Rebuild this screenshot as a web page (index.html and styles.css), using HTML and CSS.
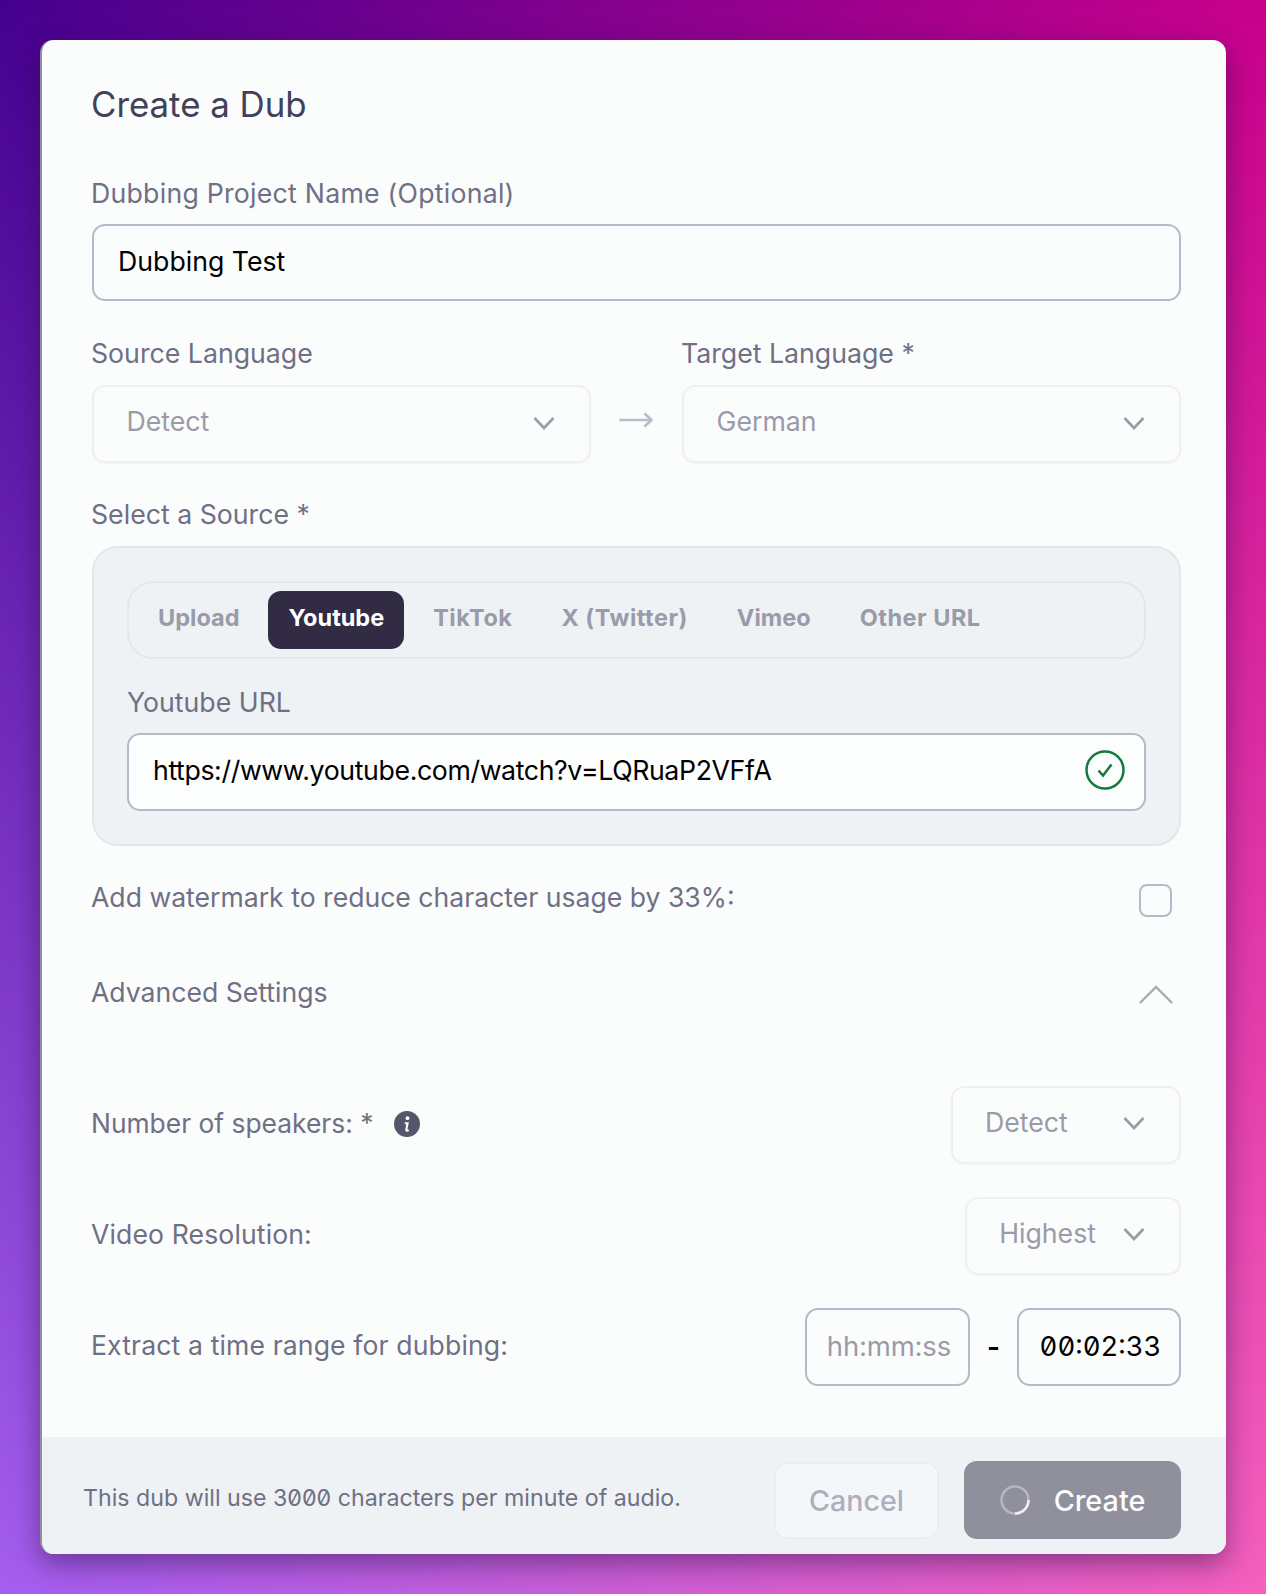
FILE: index.html
```html
<!DOCTYPE html>
<html lang="en">
<head>
<meta charset="utf-8">
<title>Create a Dub</title>
<link rel="stylesheet" href="styles.css">
</head>
<body>
<div class="page">
  <div class="card">
    <div class="content">
      <h1 class="title">Create a Dub</h1>
      <div class="field field-first">
        <label class="label label-wide">Dubbing Project Name (Optional)</label>
        <div class="input input-name">Dubbing Test</div>
      </div>
      <div class="lang-row">
        <div class="lang-col">
          <label class="label">Source Language</label>
          <div class="select select-wide"><span>Detect</span>
            <svg class="chev" viewBox="0 0 22 14"><path d="M1.500 2 11 12 20.500 2"/></svg></div>
        </div>
        <svg class="arrow" viewBox="0 0 36 16"><path d="M1.500 8H33.500M27 2l6.500 6-6.500 6"/></svg>
        <div class="lang-col">
          <label class="label">Target Language *</label>
          <div class="select select-wide"><span>German</span>
            <svg class="chev" viewBox="0 0 22 14"><path d="M1.500 2 11 12 20.500 2"/></svg></div>
        </div>
      </div>
      <div class="field field-source">
        <label class="label">Select a Source *</label>
        <div class="source">
          <div class="tabs">
            <span class="tab">Upload</span>
            <span class="tab tab-active">Youtube</span>
            <span class="tab tab-loose">TikTok</span>
            <span class="tab tab-loose">X (Twitter)</span>
            <span class="tab">Vimeo</span>
            <span class="tab tab-loose">Other URL</span>
          </div>
          <label class="label url-label">Youtube URL</label>
          <div class="input url-input">
            <span>https://www.youtube.com/watch?v=LQRuaP2VFfA</span>
            <svg class="check" viewBox="0 0 40 40"><circle cx="20" cy="20" r="18.500"/><path d="M13.500 20.500 18 25.500 26.500 14.500"/></svg>
          </div>
        </div>
      </div>
      <div class="row watermark">
        <span class="row-label">Add watermark to reduce character usage by 33%:</span>
        <span class="checkbox"></span>
      </div>
      <div class="row advanced">
        <span class="row-label">Advanced Settings</span>
        <svg class="chev-up" viewBox="0 0 36 20"><path d="M1 19 18 2 35 19"/></svg>
      </div>
      <div class="row setting first-setting">
        <span class="row-label with-icon">Number of speakers: *
          <svg class="info" viewBox="0 0 26 26"><circle cx="13" cy="13" r="13"/><circle class="info-dot" cx="13.500" cy="7.200" r="1.900"/><path class="info-bar" d="M10.800 12.200h2.800l-1.300 6.400c-.2 1.200.9 1.400 2.400.5"/></svg>
        </span>
        <div class="select select-small select-speakers"><span>Detect</span>
          <svg class="chev" viewBox="0 0 22 14"><path d="M1.500 2 11 12 20.500 2"/></svg></div>
      </div>
      <div class="row setting">
        <span class="row-label row-label-loose">Video Resolution:</span>
        <div class="select select-small"><span>Highest</span>
          <svg class="chev" viewBox="0 0 22 14"><path d="M1.500 2 11 12 20.500 2"/></svg></div>
      </div>
      <div class="row setting">
        <span class="row-label row-label-loose">Extract a time range for dubbing:</span>
        <div class="times">
          <div class="time time-empty">hh:mm:ss</div>
          <span class="dash">-</span>
          <div class="time">00:02:33</div>
        </div>
      </div>
    </div>
    <div class="footer">
      <span class="note">This dub will use 3000 characters per minute of audio.</span>
      <div class="actions">
        <button class="btn btn-cancel" type="button">Cancel</button>
        <button class="btn btn-create" type="button">
          <svg class="spinner" viewBox="0 0 30 30"><circle class="spin-track" cx="15" cy="15" r="13.500"/><path class="spin-arc" d="M28.500 15A13.500 13.500 0 0 1 15 28.500"/></svg>
          Create
        </button>
      </div>
    </div>
  </div>
</div>
</body>
</html>
```
FILE: styles.css
```css
* { box-sizing: border-box; }
html, body { margin: 0; padding: 0; }
body { font-family: Inter, "Noto Sans", sans-serif; }
.page {
  position: relative;
  width: 1266px;
  height: 1594px;
  padding: 40px 40px 0 40px;
  background: linear-gradient(90deg, #45008f 0%, #c9008c 100%);
  overflow: hidden;
}
.page::before {
  content: "";
  position: absolute;
  inset: 0;
  background: linear-gradient(90deg, #a45ef0 0%, #f45fbd 100%);
  -webkit-mask-image: linear-gradient(180deg, transparent 0%, #000 100%);
  mask-image: linear-gradient(180deg, transparent 0%, #000 100%);
}
.card {
  position: relative;
  width: 1186px;
  background: #fbfcfc;
  border-left: 2px solid #8f909b;
  border-radius: 13px;
  overflow: hidden;
  box-shadow: 0 10px 28px rgba(30, 10, 60, .45);
}
.content { padding: 44px 45px 51px 50px; }
.title {
  margin: 0 0 0 -1px;
  font-size: 34.800px;
  line-height: 40px;
  font-weight: 400;
  color: #41415a;
}
.field { margin-top: 34px; }
.field-first { margin-top: 51px; }
.field-source { margin-top: 33px; }
.label {
  display: block;
  font-size: 26.700px;
  line-height: 36px;
  margin: 0 0 14px -1px;
  color: #6f7085;
}
.label-wide { letter-spacing: .24px; margin-bottom: 13px; }
.input {
  display: flex;
  align-items: center;
  justify-content: space-between;
  height: 77px;
  padding: 0 25px;
  font-size: 26.700px;
  color: #000;
  background: #fbfcfc;
  border: 2px solid #b6bac8;
  border-radius: 13px;
}
.input-name { padding: 0 24px 3px; }
.lang-row { display: flex; justify-content: space-between; margin-top: 34px; }
.lang-col { flex: 0 0 499px; }
.arrow {
  flex: 0 0 35px;
  width: 35px;
  height: 16px;
  margin: 77px 1px 0 0;
  fill: none;
  stroke: #b9bcc9;
  stroke-width: 2.800;
  stroke-linecap: round;
  stroke-linejoin: round;
}
.select {
  display: flex;
  align-items: center;
  justify-content: space-between;
  height: 78px;
  padding-bottom: 3px;
  font-size: 26.700px;
  color: #9a9ba9;
  background: #fbfcfc;
  border: 2px solid #eff0f4;
  border-radius: 13px;
  box-shadow: 0 1px 2px rgba(0, 0, 20, .03);
}
.select-wide { padding: 0 34px 7px 32.500px; }
.select-wide .chev { margin-top: 4px; }
.select-small { padding: 0 34px 6px 32px; gap: 27px; }
.select-speakers { width: 230px; }
.chev {
  width: 22px;
  height: 14px;
  fill: none;
  stroke: #9a9ba9;
  stroke-width: 2.600;
  margin-top: 2px;
}
.source {
  height: 300px;
  padding: 33px 33px 0;
  background: #eef2f5;
  border: 2px solid #e3e7ec;
  border-radius: 26px;
}
.tabs {
  display: flex;
  align-items: center;
  gap: 9px;
  height: 78px;
  padding: 0 9px;
  border: 2px solid #e3e7ec;
  border-radius: 26px;
}
.tab {
  padding: 0 20px;
  height: 58px;
  line-height: 54px;
  font-size: 23.500px;
  font-weight: 700;
  color: #9a9ba9;
  border-radius: 13px;
}
.tab-loose { letter-spacing: .5px; }
.tab-active { background: #312c44; color: #fff; }
.url-label { margin: 25px 0 13px; }
.url-input { height: 78px; padding: 0 19px 4px 24px; background: #fcfdfd; letter-spacing: -.38px; }
.check { width: 40px; height: 40px; fill: none; stroke: #137a3e; stroke-width: 2.500; }
.row { display: flex; align-items: center; justify-content: space-between; }
.row-label { margin-left: -1px; font-size: 26.600px; line-height: 36px; color: #6f7085; }
.row-label-loose { letter-spacing: .12px; }
.setting .row-label { margin-bottom: 5px; }
.watermark { margin-top: 30px; }
.checkbox {
  width: 33px;
  height: 33px;
  margin: 8px 9px 0 0;
  border: 2px solid #b6bac8;
  border-radius: 8px;
}
.advanced { margin-top: 57px; }
.chev-up { width: 34px; height: 19px; margin: 5px 8px 0 0; fill: none; stroke: #a9abb8; stroke-width: 2.600; }
.setting { margin-top: 33px; }
.first-setting { margin-top: 76px; }
.with-icon { display: flex; align-items: center; gap: 21px; font-size: 26.400px; }
.info { width: 26px; height: 26px; margin-top: 3px; fill: #55566b; }
.info .info-dot { fill: #fff; }
.info .info-bar { fill: none; stroke: #fff; stroke-width: 2.100; }
.times { display: flex; align-items: center; }
.time {
  display: flex;
  align-items: center;
  justify-content: center;
  width: 164px;
  height: 78px;
  padding: 0 0 2px 3px;
  font-size: 27.500px;
  color: #000;
  border: 2px solid #b6bac8;
  border-radius: 13px;
  font-variant-numeric: slashed-zero tabular-nums;
}
.time-empty { width: 165px; color: #9a9ba9; }
.dash { width: 47px; text-align: center; font-size: 28px; font-weight: 600; color: #000; }
.footer {
  display: flex;
  align-items: flex-start;
  justify-content: space-between;
  height: 117px;
  padding: 24px 45px 0 41px;
  background: #eef2f5;
}
.note {
  margin-top: 19px;
  font-size: 23.200px;
  line-height: 36px;
  color: #6f7085;
  font-variant-numeric: slashed-zero;
}
.actions { display: flex; gap: 25px; }
.btn {
  height: 78px;
  font-family: inherit;
  font-size: 28.600px;
  font-weight: 500;
  border-radius: 13px;
  display: flex;
  align-items: center;
  justify-content: center;
}
.btn-cancel {
  width: 165px;
  margin-top: 1px;
  height: 77px;
  background: #f4f7fa;
  color: #aeafbb;
  border: 2px solid #ebedf1;
}
.btn-create {
  width: 217px;
  gap: 24px;
  font-size: 28.800px;
  background: #90909c;
  color: #fbfcfc;
  border: 0;
}
.spinner { width: 30px; height: 30px; fill: none; stroke-width: 2.500; }
.spin-track { stroke: rgba(255, 255, 255, .35); }
.spin-arc { stroke: rgba(255, 255, 255, .8); }
```
